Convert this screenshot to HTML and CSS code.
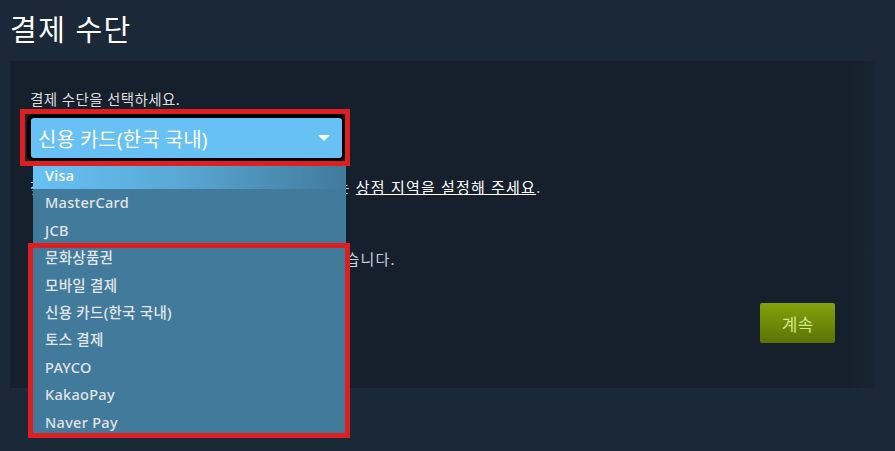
FILE: index.html
```html
<!DOCTYPE html>
<html lang="ko">
<head>
  <meta charset="UTF-8">
  <meta name="viewport" content="width=device-width, initial-scale=1">
  <title>결제 수단</title>
  <link rel="stylesheet" href="styles.css">
</head>
<body>
  <!-- Page title -->
  <h1 class="page-title">결제 수단</h1>

  <!-- Payment panel -->
  <div class="panel">
    <p class="label">결제 수단을 선택하세요.</p>

    <div class="select-wrap">
      <div class="select">
        <span>신용 카드(한국 국내)</span>
        <span class="arrow"></span>
      </div>

      <!-- Open dropdown list -->
      <ul class="dropdown">
        <li class="active">Visa</li>
        <li>MasterCard</li>
        <li>JCB</li>
        <li>문화상품권</li>
        <li>모바일 결제</li>
        <li>신용 카드(한국 국내)</li>
        <li>토스 결제</li>
        <li>PAYCO</li>
        <li>KakaoPay</li>
        <li>Naver Pay</li>
      </ul>

      <!-- Annotation boxes -->
      <div class="mark mark-select"></div>
      <div class="mark mark-list"></div>
    </div>

    <p class="note">찾는 결제 수단이 없다면 거주 중인 국가에 맞는 <a href="#">상점 지역을 설정해 주세요</a>.</p>
    <p class="note note-second">대한민국에서 발급된 신용 카드만 사용할 수 있습니다.</p>

    <div class="actions">
      <button class="btn-green">계속</button>
    </div>
  </div>
</body>
</html>
```

FILE: styles.css
```css
/* Global reset */
* {
  margin: 0;
  padding: 0;
  box-sizing: border-box;
}
body {
  font-family: "Noto Sans", "Noto Sans CJK KR", sans-serif;
  background-color: #1b2838;
  color: #c6d4df;
  height: 451px;
  overflow: hidden;
}
/* Title */
.page-title {
  font-size: 29px;
  font-weight: normal;
  letter-spacing: 1.5px;
  color: #fff;
  padding: 11px 0 0 10px;
  height: 61px;
  line-height: 38px;
}
/* Panel */
.panel {
  background: linear-gradient(to right, #16202d 97%, #1a2533 100%);
  margin: 0 20px 0 10px;
  padding: 28px 40px 45px 21px;
  height: 327px;
}
.label {
  font-size: 14.5px;
  letter-spacing: 0.4px;
  line-height: 20px;
  color: #dcdedf;
  margin-left: -1px;
  margin-bottom: 9px;
}
/* Select */
.select-wrap {
  position: relative;
  width: 311px;
}
.select {
  display: flex;
  justify-content: space-between;
  align-items: center;
  height: 40px;
  padding: 0 12px 0 7px;
  background-color: #67c1f5;
  border-radius: 3px;
  box-shadow: 0 0 0 4px #000;
  color: #fff;
  font-size: 20px;
}
.arrow {
  width: 0;
  height: 0;
  border-left: 6px solid transparent;
  border-right: 6px solid transparent;
  border-top: 6px solid #fff;
}
.dropdown {
  position: absolute;
  left: 2px;
  top: 44px;
  width: 313px;
  list-style: none;
  background-color: #417a9b;
  z-index: 10;
}
.dropdown li {
  height: 27.4px;
  line-height: 27.4px;
  padding-left: 12px;
  font-size: 14.5px;
  letter-spacing: 0.3px;
  font-weight: 500;
  color: #e1e5e8;
}
.dropdown li.active {
  background: linear-gradient(to right, #67c1f5 0%, #5aa9d6 45%, #417a9b 100%);
  color: #fff;
}
/* Red annotation boxes */
.mark {
  position: absolute;
  border: 5px solid #dd1f1f;
  z-index: 20;
}
.mark-select {
  left: -11px;
  top: -9px;
  width: 330px;
  height: 57px;
}
.mark-list {
  left: -3px;
  top: 125px;
  width: 322px;
  height: 195px;
}
/* Notes */
.note {
  font-size: 15px;
  letter-spacing: 1.2px;
  line-height: 20px;
  margin-top: 19px;
  margin-left: -1px;
  white-space: nowrap;
}
.note a {
  color: #fff;
  text-decoration: underline;
}
.note-second {
  margin-top: 52px;
}
/* Continue button */
.actions {
  display: flex;
  justify-content: flex-end;
  margin-top: 34px;
}
.btn-green {
  width: 75px;
  height: 40px;
  border: none;
  border-radius: 2px;
  background: linear-gradient(to bottom, #7fa00a 5%, #5c7606 95%);
  color: #d2e885;
  font-family: "Noto Sans", "Noto Sans CJK KR", sans-serif;
  font-size: 17px;
  cursor: pointer;
}
```
